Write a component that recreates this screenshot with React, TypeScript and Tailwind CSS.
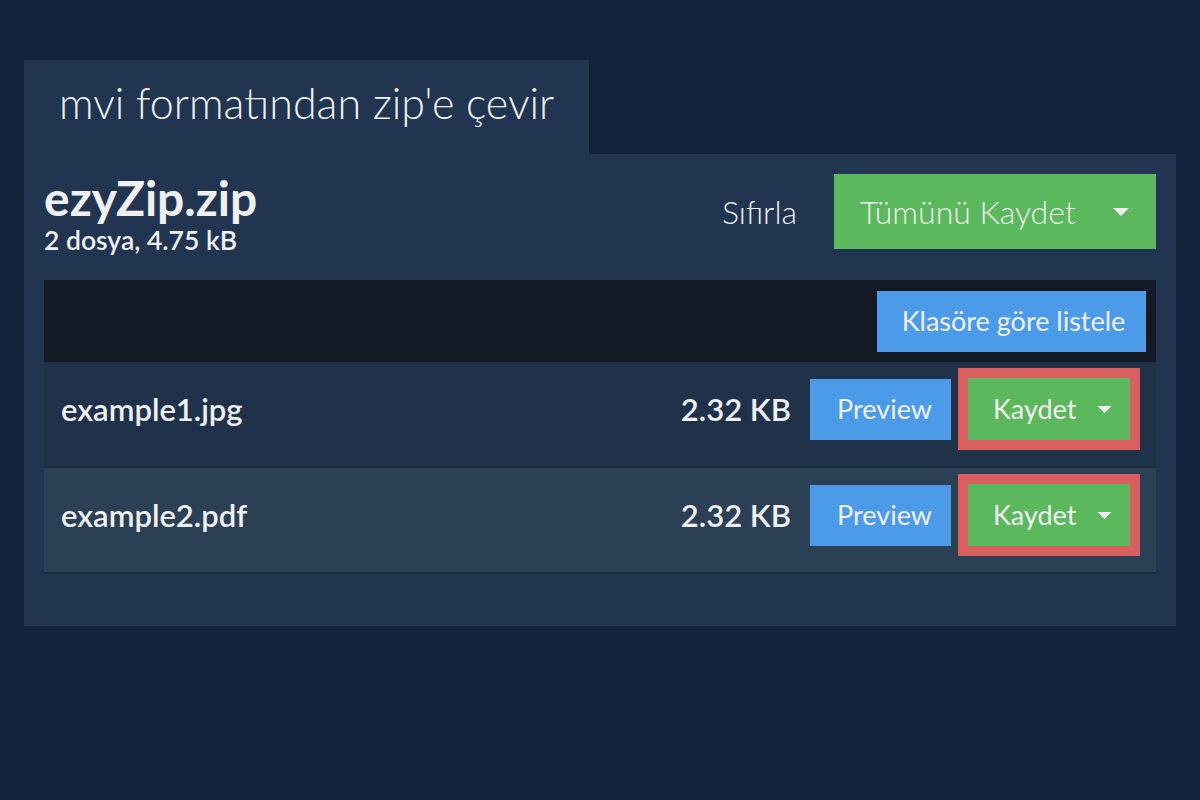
import React from 'react';

function Caret({ className }: { className?: string }) {
  return (
    <svg viewBox="0 0 16 8" className={className} fill="currentColor">
      <path d="M0 0h16L8 8z" />
    </svg>
  );
}

const files = [
  { name: 'example1.jpg', size: '2.32 KB', bg: 'bg-[#1f3249]' },
  { name: 'example2.pdf', size: '2.32 KB', bg: 'bg-[#2b3f55]' },
];

export default function App() {
  return (
    <div
      className="min-h-[800px] bg-[#10233a] px-6 pt-[60px] text-[#eef0f2]"
      style={{ fontFamily: 'Lato, "Open Sans", sans-serif' }}
    >
      <div className="flex h-[94px] w-[565px] items-center bg-[#213550] pl-[35px] pb-[10px]">
        <h1 className="whitespace-nowrap text-[43px] font-light leading-none">mvi formatından zip'e çevir</h1>
      </div>

      <div className="bg-[#213550] px-5 pt-5 pb-[52px]">
        <div className="flex h-[75px] items-start justify-between">
          <div>
            <div className="text-[48px] font-bold leading-[48px]">ezyZip.zip</div>
            <div className="mt-[5px] text-[26.5px] font-semibold leading-[26px]">2 dosya, 4.75 kB</div>
          </div>
          <div className="flex items-center">
            <button className="mr-[37px] text-[32px] font-light">Sıfırla</button>
            <button className="flex h-[75px] w-[322px] items-center bg-[#5cb85c] pl-[26px] pr-[27px] text-[32px] font-light">
              <span className="flex-1 whitespace-nowrap text-left">Tümünü Kaydet</span>
              <Caret className="h-2 w-4" />
            </button>
          </div>
        </div>

        <div className="mt-[31px] flex h-[82px] items-center justify-end bg-[#131a25] pr-[10px]">
          <button className="h-[61px] w-[269px] whitespace-nowrap bg-[#4c9be8] pl-[4px] text-[27px] font-normal">
            Klasöre göre listele
          </button>
        </div>

        {files.map((f) => (
          <div
            key={f.name}
            className={`flex h-[106px] items-start border-b-2 border-[#1a2a3f] pt-[6px] pl-[17px] pr-4 ${f.bg}`}
          >
            <div className="flex h-[82px] flex-1 items-center text-[31px] font-semibold">{f.name}</div>
            <div className="flex h-[82px] items-center text-[31px] font-semibold">{f.size}</div>
            <div className="ml-[19px] flex h-[82px] items-center">
              <button className="h-[61px] w-[141px] bg-[#4c9be8] pl-[8px] text-[27px]">Preview</button>
            </div>
            <div className="ml-[7px] border-[10px] border-[#d9605e]">
              <button className="flex h-[62px] w-[162px] items-center bg-[#5cb85c] pl-[25px] pr-[18px] text-[27px]">
                <span className="flex-1 text-left">Kaydet</span>
                <Caret className="h-[7px] w-[15px]" />
              </button>
            </div>
          </div>
        ))}
      </div>
    </div>
  );
}
